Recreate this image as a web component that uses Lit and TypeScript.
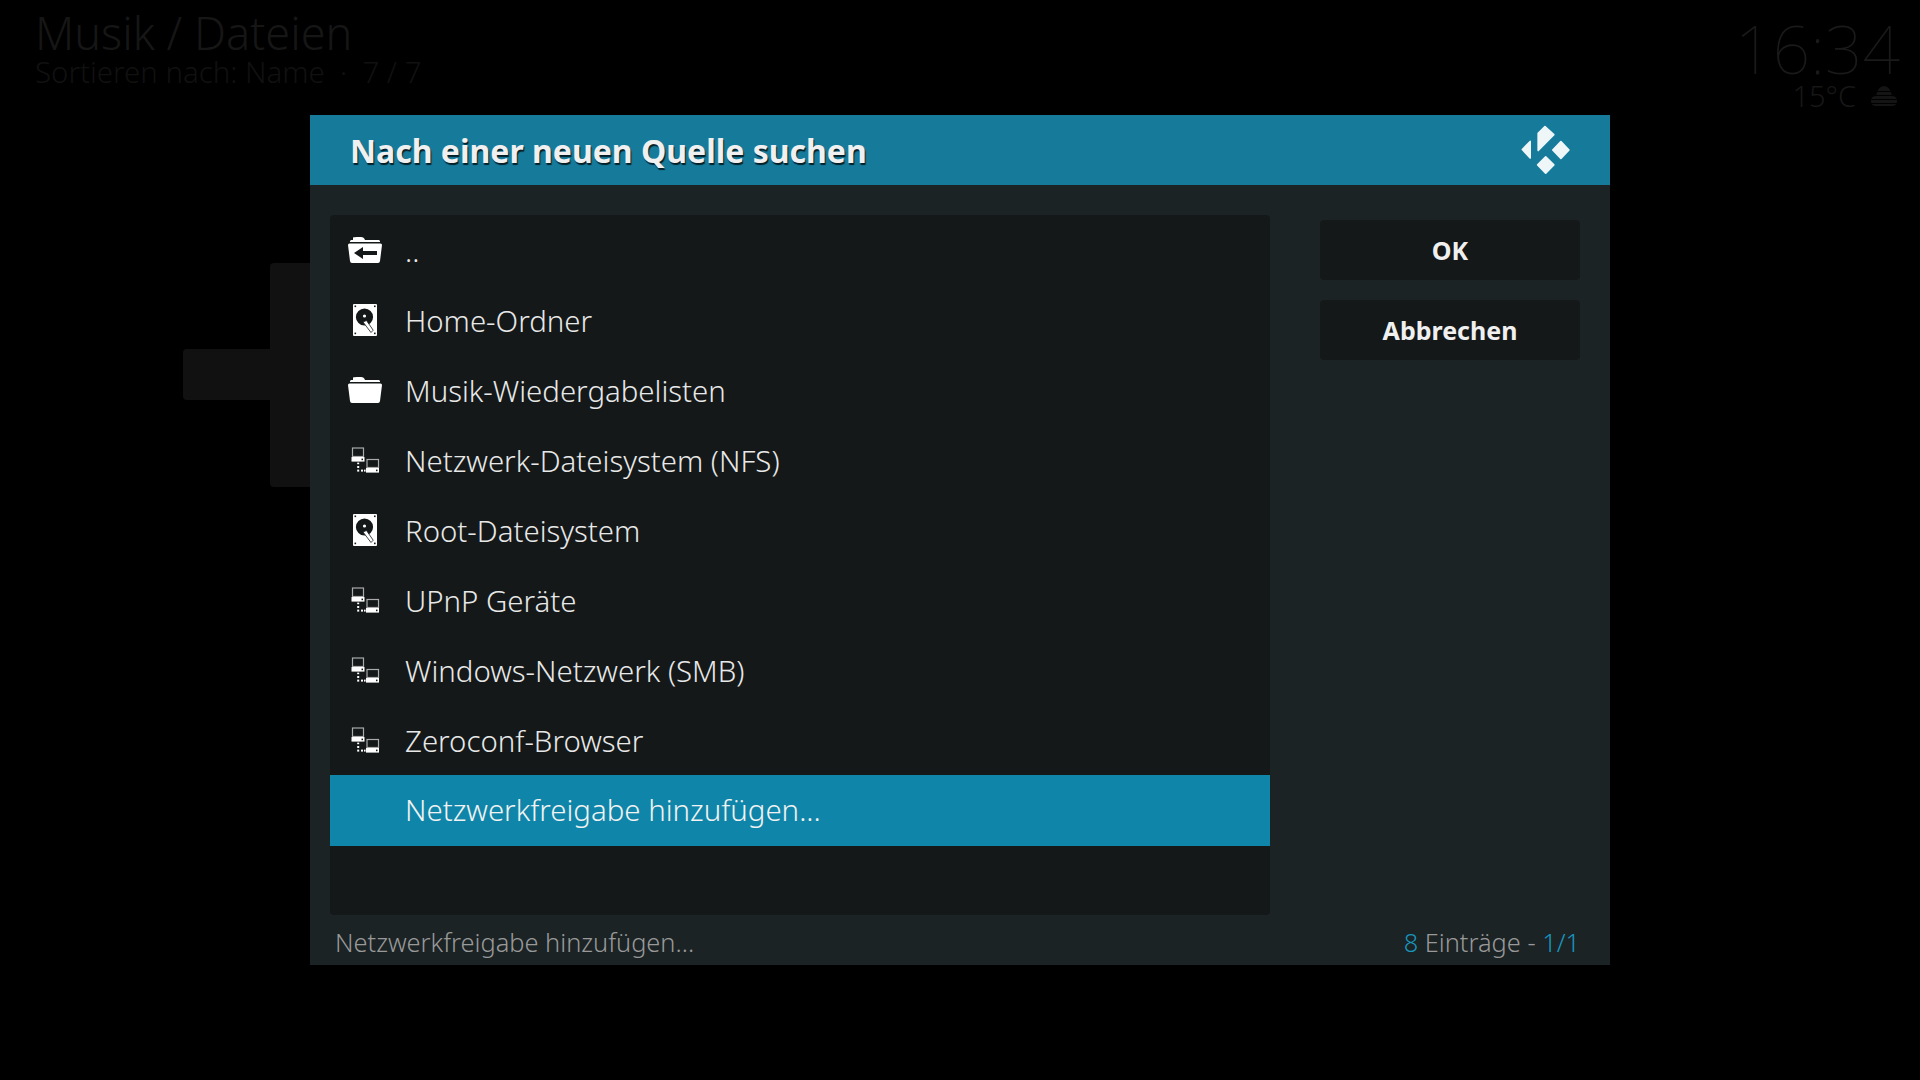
import { LitElement, html, css, svg } from "lit";
import { customElement } from "lit/decorators.js";

const folderShape = svg`<path d="M5 3.5 Q5 3 9 3 h4 q3 0 4 3 h14 l1 1 v1 H2 V7 l1-1h2z" fill="#fff"/><path d="M0 11 Q0 9.5 1.5 9.5 h31 Q34 9.5 34 11 l-2 16 q-.2 2-2 2 H4 q-1.8 0-2-2z" fill="#fff"/>`;
const iconBack = svg`${folderShape}<path d="M6 19 L15 13 V17 H29 V21 H15 V25z" fill="#141819"/>`;
const iconHdd = svg`<rect x="5" y="0" width="24" height="32" rx="1" fill="#fff"/>
  <circle cx="16.5" cy="13" r="8.6" fill="#141819"/>
  <circle cx="16.5" cy="12" r="1.6" fill="#fff"/>
  <path d="M15 18 L23 28.5 L25.2 26.2 L18.5 16.5z" fill="#fff" stroke="#141819" stroke-width=".8"/>
  <g fill="#141819"><rect x="6.5" y="1.5" width="1.6" height="1.6"/><rect x="26" y="1.5" width="1.6" height="1.6"/><rect x="6.5" y="28.6" width="1.6" height="1.6"/><rect x="26" y="28.6" width="1.6" height="1.6"/></g>`;
const iconNet = svg`<rect x="4.5" y="4" width="11" height="8.5" fill="none" stroke="#aaa" stroke-width="1.2"/>
  <rect x="3.5" y="13" width="13" height="4.6" fill="#fff"/><rect x="13.5" y="14.6" width="1.5" height="1.6" fill="#141819"/>
  <rect x="19" y="15.5" width="11.5" height="8" fill="none" stroke="#aaa" stroke-width="1.2"/>
  <rect x="18" y="24" width="13" height="4.6" fill="#fff"/><rect x="28" y="25.6" width="1.5" height="1.6" fill="#141819"/>
  <g fill="#fff"><rect x="9.2" y="18.6" width="2" height="1.6"/><rect x="9.2" y="22" width="2" height="2"/><rect x="9.2" y="25.6" width="2" height="2"/><rect x="13" y="25.6" width="2" height="2"/><rect x="16" y="25.6" width="1.6" height="2"/></g>`;

type Row = { label: string; icon?: any; selected?: boolean };
const rows: Row[] = [
  { label: "..", icon: iconBack },
  { label: "Home-Ordner", icon: iconHdd },
  { label: "Musik-Wiedergabelisten", icon: folderShape },
  { label: "Netzwerk-Dateisystem (NFS)", icon: iconNet },
  { label: "Root-Dateisystem", icon: iconHdd },
  { label: "UPnP Geräte", icon: iconNet },
  { label: "Windows-Netzwerk (SMB)", icon: iconNet },
  { label: "Zeroconf-Browser", icon: iconNet },
  { label: "Netzwerkfreigabe hinzufügen...", selected: true },
];

@customElement("app-root")
export class AppRoot extends LitElement {
  static styles = css`
    :host {
      display: block;
      position: relative;
      width: 1920px;
      height: 1080px;
      overflow: hidden;
      background: #000;
      font-family: "Noto Sans", sans-serif;
    }
    .top {
      display: flex;
      justify-content: space-between;
      padding: 0 20px 0 35px;
    }
    .crumb {
      font-size: 45px;
      font-weight: 300;
      line-height: 48px;
      color: #161616;
      margin-top: 9px;
    }
    .sort {
      font-size: 29.4px;
      font-weight: 300;
      line-height: 30px;
      color: #111;
    }
    .clock {
      display: flex;
      flex-direction: column;
      align-items: flex-end;
    }
    .time {
      font-size: 66px;
      font-weight: 100;
      line-height: 64px;
      margin-top: 16px;
      color: #1a1a1a;
    }
    .weather {
      display: flex;
      align-items: center;
      gap: 15px;
      font-size: 29px;
      font-weight: 300;
      line-height: 32px;
      padding-right: 3px;
      color: #171717;
    }
    .cloud { width: 26px; height: 20px; display: block; }
    .plus {
      position: absolute;
      left: 183px;
      top: 263px;
      width: 224px;
      height: 224px;
      display: block;
    }
    .overlay {
      position: absolute;
      inset: 0;
      display: grid;
      place-items: center;
    }
    .dialog {
      width: 1300px;
      height: 850px;
      background: #1b2325;
      display: flex;
      flex-direction: column;
    }
    .head {
      height: 70px;
      flex: none;
      background: #167b9b;
      display: flex;
      align-items: center;
      justify-content: space-between;
      padding: 0 39px 0 40px;
    }
    .title {
      font-size: 32px;
      font-weight: 700;
      color: #f0f0f0;
      text-shadow: 1px 2px 1px rgba(0, 0, 0, 0.75);
    }
    .logo { width: 50px; height: 50px; display: block; }
    .body {
      display: flex;
      gap: 50px;
      padding: 30px 30px 0 20px;
      flex: 1;
    }
    .list {
      width: 940px;
      height: 700px;
      background: #141819;
      border-radius: 4px;
      overflow: hidden;
    }
    .row {
      height: 70px;
      display: flex;
      align-items: center;
      color: #e8e8e8;
      font-size: 29.4px;
      font-weight: 300;
    }
    .label { padding-top: 2px; }
    .row.sel { background: #0f86a9; color: #f2f2f2; height: 71px; }
    .row.sel .label { padding-top: 0; padding-bottom: 1px; }
    .ico { width: 34px; height: 32px; margin: 0 23px 0 18px; flex: none; display: block; }
    .side {
      width: 260px;
      display: flex;
      flex-direction: column;
      gap: 20px;
      padding-top: 5px;
    }
    .btn {
      height: 60px;
      background: #141819;
      border-radius: 4px;
      display: flex;
      align-items: center;
      justify-content: center;
      color: #f0f0f0;
      font-size: 25px;
      font-weight: 700;
    }
    .foot {
      height: 50px;
      flex: none;
      display: flex;
      align-items: center;
      justify-content: space-between;
      padding: 4px 30px 0 25px;
      box-sizing: border-box;
      font-size: 25.4px;
      font-weight: 300;
      color: #999;
    }
    .foot b { font-weight: 300; color: #1995bd; }
  `;

  render() {
    return html`
      <div class="top">
        <div>
          <div class="crumb">Musik / Dateien</div>
          <div class="sort">Sortieren nach: Name &nbsp;·&nbsp; 7 / 7</div>
        </div>
        <div class="clock">
          <div class="time">16:34</div>
          <div class="weather">
            <span>15°C</span>
            <svg class="cloud" viewBox="0 0 26 20">
              <path d="M0 15 Q0 10 5 10 Q7 0 13 0 Q19 0 21 10 Q26 10 26 15 Q26 20 21 20 H5 Q0 20 0 15z" fill="#141414"/>
              <g fill="#000"><rect y="5" width="26" height="1"/><rect y="9" width="26" height="1"/><rect y="13" width="26" height="1"/><rect y="17" width="26" height="1"/></g>
            </svg>
          </div>
        </div>
      </div>
      <svg class="plus" viewBox="0 0 224 224">
        <path d="M91 0 H134 Q138 0 138 4 V86 H220 Q224 86 224 90 V133 Q224 137 220 137 H138 V220 Q138 224 134 224 H91 Q87 224 87 220 V137 H4 Q0 137 0 133 V90 Q0 86 4 86 H87 V4 Q87 0 91 0z" fill="#111"/>
      </svg>
      <div class="overlay">
        <div class="dialog">
          <div class="head">
            <div class="title">Nach einer neuen Quelle suchen</div>
            <svg class="logo" viewBox="0 0 48 48">
              <g fill="#eef6f8" stroke="#eef6f8" stroke-width="1.6" stroke-linejoin="round">
                <path d="M1.3 23.5 L8.8 15.8 V31.6z"/>
                <path d="M16.5 8 L23 1.5 L31.5 9.2 L16.5 24.5z"/>
                <path d="M38.3 16 L46 24 L38.3 32 L30.5 24z"/>
                <path d="M23.7 30.5 L31.5 38.3 L23.7 46.2 L16 38.3z"/>
              </g>
            </svg>
          </div>
          <div class="body">
            <div class="list">
              ${rows.map(
                (r) => html`<div class="row ${r.selected ? "sel" : ""}">
                  ${r.icon
                    ? html`<svg class="ico" viewBox="0 0 34 32">${r.icon}</svg>`
                    : html`<span class="ico"></span>`}
                  <span class="label">${r.label}</span>
                </div>`
              )}
            </div>
            <div class="side">
              <div class="btn">OK</div>
              <div class="btn">Abbrechen</div>
            </div>
          </div>
          <div class="foot">
            <span>Netzwerkfreigabe hinzufügen...</span>
            <span><b>8</b> Einträge - <b>1/1</b></span>
          </div>
        </div>
      </div>
    `;
  }
}
